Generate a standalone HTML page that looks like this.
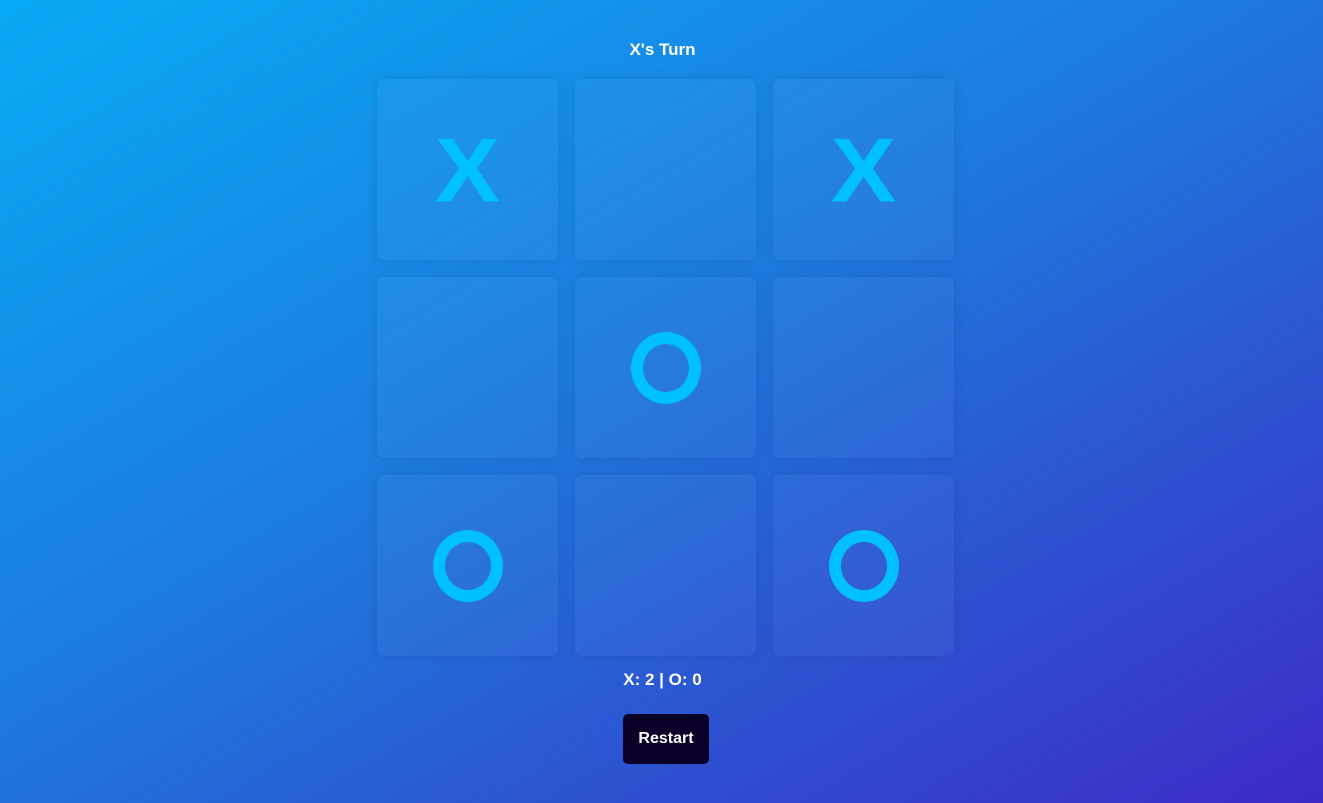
<!DOCTYPE html>
<html><head><meta charset="utf-8"><style>
html,body{margin:0;width:1323px;height:803px;overflow:hidden}
body{background:linear-gradient(150deg,#08aaf6 0%,#1d7ade 45%,#3d2bc4 100%);font-family:"Liberation Sans",sans-serif;color:#fff;position:relative}
.t{position:absolute;top:40px;left:1px;width:1323px;text-align:center;font-weight:bold;font-size:17px}
.g{position:absolute;left:377px;top:79px;display:grid;grid-template-columns:repeat(3,181px);grid-template-rows:repeat(3,181px);gap:17px}
.c{background:rgba(255,255,255,0.035);border-radius:7px;box-shadow:0 0 12px rgba(0,0,40,0.1);display:flex;align-items:center;justify-content:center;color:#00c0ff;font-weight:bold;font-size:98px;line-height:1}
.x{transform:scaleY(0.93)}
.o{width:46px;height:48px;border:12px solid #00c0ff;border-radius:50%}
.s{position:absolute;top:670px;left:1px;width:1323px;text-align:center;font-weight:bold;font-size:17px}
.b{position:absolute;left:623px;top:714px;width:86px;height:50px;background:#0a0027;border-radius:5px;display:flex;align-items:center;justify-content:center;font-weight:bold;font-size:16px}
</style></head><body>
<div class="t">X's Turn</div>
<div class="g">
<div class="c"><span class="x">X</span></div><div class="c"></div><div class="c"><span class="x">X</span></div>
<div class="c"></div><div class="c"><div class="o"></div></div><div class="c"></div>
<div class="c"><div class="o"></div></div><div class="c"></div><div class="c"><div class="o"></div></div>
</div>
<div class="s">X: 2 | O: 0</div>
<div class="b">Restart</div>
</body></html>
